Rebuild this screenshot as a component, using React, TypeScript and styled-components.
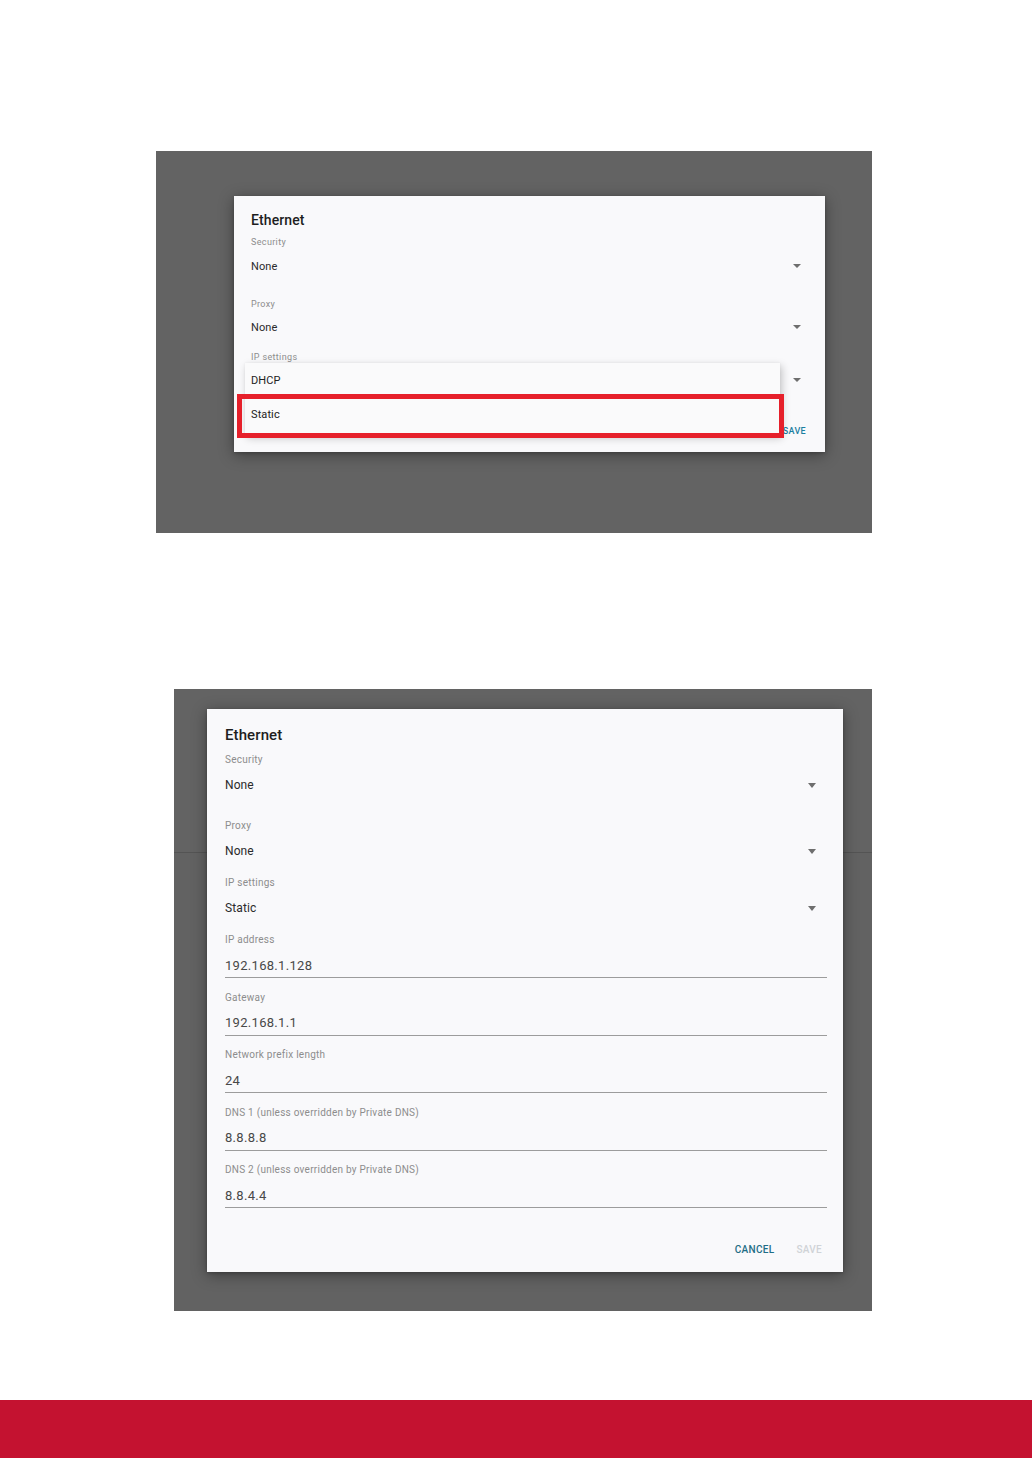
import React from "react";
import styled, { createGlobalStyle, css } from "styled-components";

const GlobalStyle = createGlobalStyle`
  html, body {
    margin: 0;
    padding: 0;
    background: #ffffff;
  }
  body {
    font-family: Roboto, "Noto Sans", "Liberation Sans", sans-serif;
  }
  * {
    box-sizing: border-box;
  }
`;

const Page = styled.div`
  width: 1032px;
  height: 1458px;
  display: flex;
  flex-direction: column;
  overflow: hidden;
  background: #ffffff;
`;

const Screen = styled.section<{
  $top: number;
  $left: number;
  $w: number;
  $h: number;
  $padTop: number;
  $padLeft: number;
  $seam?: number;
}>`
  flex-shrink: 0;
  margin: ${(p) => p.$top}px 0 0 ${(p) => p.$left}px;
  width: ${(p) => p.$w}px;
  height: ${(p) => p.$h}px;
  padding: ${(p) => p.$padTop}px 0 0 ${(p) => p.$padLeft}px;
  background: #636363;
  ${(p) =>
    p.$seam &&
    css`
      background: linear-gradient(
        to bottom,
        #636363 0,
        #636363 ${p.$seam}px,
        #545454 ${p.$seam}px,
        #545454 ${p.$seam + 1}px,
        #626262 ${p.$seam + 1}px
      );
    `}
`;

const Dialog = styled.div<{ $w: number; $h: number; $small?: boolean }>`
  position: relative;
  width: ${(p) => p.$w}px;
  height: ${(p) => p.$h}px;
  display: flex;
  flex-direction: column;
  padding: 0 ${(p) => (p.$small ? 24 : 16)}px 0 ${(p) => (p.$small ? 17 : 18)}px;
  background: #f9f9fb;
  box-shadow: 0 3px 14px rgba(0, 0, 0, 0.38), 0 1px 3px rgba(0, 0, 0, 0.2);
`;

const Title = styled.h2<{ $small?: boolean }>`
  margin: ${(p) => (p.$small ? 14 : 16)}px 0 0;
  font-size: ${(p) => (p.$small ? 14 : 15)}px;
  line-height: 20px;
  font-weight: 500;
  letter-spacing: 0.1px;
  color: #1e1e1e;
`;

const Label = styled.div<{ $gap: number; $small?: boolean }>`
  margin-top: ${(p) => p.$gap}px;
  font-size: ${(p) => (p.$small ? 9 : 10)}px;
  line-height: ${(p) => (p.$small ? 12 : 14)}px;
  letter-spacing: ${(p) => (p.$small ? 0.35 : 0.25)}px;
  color: #8d8d8d;
  white-space: nowrap;
`;

const SelectRow = styled.div<{ $gap: number; $small?: boolean }>`
  margin-top: ${(p) => p.$gap}px;
  height: 24px;
  display: flex;
  align-items: center;
  justify-content: space-between;
  padding-right: ${(p) => (p.$small ? 0 : 11)}px;
  font-size: ${(p) => (p.$small ? 11 : 12)}px;
  letter-spacing: 0.1px;
  color: #2b2b2b;
`;

const Caret = styled.span<{ $small?: boolean }>`
  width: 0;
  height: 0;
  border-left: ${(p) => (p.$small ? 4 : 4.5)}px solid transparent;
  border-right: ${(p) => (p.$small ? 4 : 4.5)}px solid transparent;
  border-top: ${(p) => (p.$small ? 4 : 5)}px solid #6e6e6e;
`;

const TextRow = styled.div`
  margin-top: 6px;
  height: 25px;
  display: flex;
  align-items: center;
  border-bottom: 1px solid #9c9c9c;
  font-size: 13px;
  color: #484848;
  letter-spacing: 0.3px;
`;

const Actions = styled.div<{ $gap: number; $small?: boolean }>`
  margin-top: ${(p) => p.$gap}px;
  margin-right: ${(p) => (p.$small ? -5 : 5)}px;
  display: flex;
  justify-content: flex-end;
  gap: ${(p) => (p.$small ? 20 : 22)}px;
`;

const ActionButton = styled.button<{ $disabled?: boolean; $small?: boolean }>`
  padding: 0;
  border: none;
  background: none;
  font-family: inherit;
  font-size: ${(p) => (p.$small ? 9 : 10)}px;
  line-height: ${(p) => (p.$small ? 12 : 14)}px;
  font-weight: 500;
  letter-spacing: 0.3px;
  text-transform: uppercase;
  color: ${(p) => (p.$disabled ? "#d0d3d7" : p.$small ? "#1c7ea1" : "#1f6e86")};
`;

const Menu = styled.ul`
  position: absolute;
  left: 11px;
  top: 167px;
  width: 535px;
  height: 72px;
  margin: 0;
  padding: 0;
  list-style: none;
  background: #fafafb;
  box-shadow: 2px 3px 8px rgba(0, 0, 0, 0.22), 0 0 2px rgba(0, 0, 0, 0.06);
`;

const MenuItem = styled.li`
  height: 34px;
  display: flex;
  align-items: center;
  padding-left: 6px;
  font-size: 11px;
  letter-spacing: 0.1px;
  color: #222222;
`;

const Highlight = styled.div`
  position: absolute;
  left: 3px;
  top: 198px;
  width: 547px;
  height: 44px;
  border: 5px solid #e6202b;
  pointer-events: none;
`;

const Footer = styled.footer`
  flex-shrink: 0;
  margin-top: 89px;
  height: 58px;
  background: #c41230;
`;

type SelectProps = { label: string; value: string; gap: number; small?: boolean };

const SelectField = ({ label, value, gap, small }: SelectProps) => (
  <>
    <Label $gap={gap} $small={small}>
      {label}
    </Label>
    <SelectRow $gap={6} $small={small}>
      <span>{value}</span>
      <Caret $small={small} />
    </SelectRow>
  </>
);

const TextField = ({ label, value, gap }: { label: string; value: string; gap: number }) => (
  <>
    <Label $gap={gap}>{label}</Label>
    <TextRow>{value}</TextRow>
  </>
);

export default function App() {
  return (
    <Page>
      <GlobalStyle />

      <Screen $top={151} $left={156} $w={716} $h={382} $padTop={45} $padLeft={78}>
        <Dialog $w={591} $h={256} $small>
          <Title $small>Ethernet</Title>
          <Label $gap={6} $small>
            Security
          </Label>
          <SelectRow $gap={6} $small>
            <span>None</span>
            <Caret $small />
          </SelectRow>
          <Label $gap={20} $small>
            Proxy
          </Label>
          <SelectRow $gap={5} $small>
            <span>None</span>
            <Caret $small />
          </SelectRow>
          <Label $gap={12} $small>
            IP settings
          </Label>
          <SelectRow $gap={5} $small>
            <span>DHCP</span>
            <Caret $small />
          </SelectRow>
          <Actions $gap={33} $small>
            <ActionButton $small>Cancel</ActionButton>
            <ActionButton $small>Save</ActionButton>
          </Actions>

          <Menu>
            <MenuItem>DHCP</MenuItem>
            <MenuItem>Static</MenuItem>
          </Menu>
          <Highlight />
        </Dialog>
      </Screen>

      <Screen $top={156} $left={174} $w={698} $h={622} $padTop={20} $padLeft={33} $seam={163}>
        <Dialog $w={636} $h={563}>
          <Title>Ethernet</Title>
          <SelectField label="Security" value="None" gap={8} />
          <SelectField label="Proxy" value="None" gap={22} />
          <SelectField label="IP settings" value="Static" gap={13} />
          <TextField label="IP address" value="192.168.1.128" gap={13} />
          <TextField label="Gateway" value="192.168.1.1" gap={12.5} />
          <TextField label="Network prefix length" value="24" gap={12.5} />
          <TextField label="DNS 1 (unless overridden by Private DNS)" value="8.8.8.8" gap={12.5} />
          <TextField label="DNS 2 (unless overridden by Private DNS)" value="8.8.4.4" gap={12.5} />
          <Actions $gap={35}>
            <ActionButton>Cancel</ActionButton>
            <ActionButton $disabled>Save</ActionButton>
          </Actions>
        </Dialog>
      </Screen>

      <Footer />
    </Page>
  );
}
